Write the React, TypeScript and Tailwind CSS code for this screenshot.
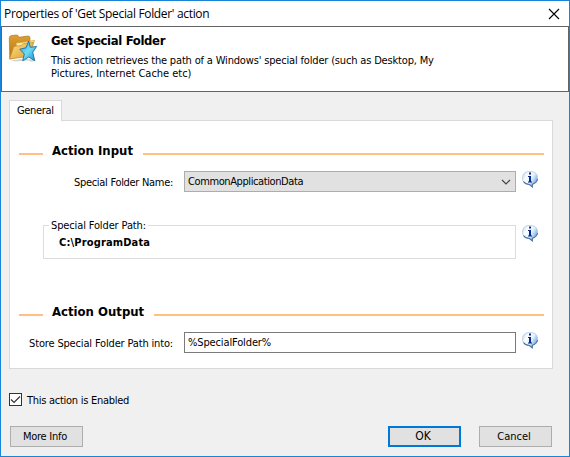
import { useId } from "react";
import type { ReactNode } from "react";

function FolderIcon() {
  return (
    <svg width="30" height="30" viewBox="0 0 30 30" className="mt-px">
      <defs>
        <linearGradient id="back" x1="0" y1="0" x2="0" y2="1">
          <stop offset="0" stopColor="#dfa036" />
          <stop offset="1" stopColor="#b4730f" />
        </linearGradient>
        <linearGradient id="front" x1="0" y1="0" x2="1" y2="1">
          <stop offset="0" stopColor="#ffe084" />
          <stop offset="1" stopColor="#d99a28" />
        </linearGradient>
        <linearGradient id="star" x1="0" y1="0" x2="1" y2="1">
          <stop offset="0" stopColor="#2f9fd6" />
          <stop offset="0.5" stopColor="#6fdcf6" />
          <stop offset="1" stopColor="#1687c0" />
        </linearGradient>
      </defs>
      <path d="M3 26.500 L16 24.500 L28 26 L24 28 L20 26.500 L7 27.500 Z" fill="#aaa" opacity="0.5" />
      <path d="M1.300 4 Q1.300 1.800 3.500 1.600 L8.500 1 Q10.300 1 11 3.300 L20 2 Q22 2 22 4 L21.500 20 L1.800 25 Z" fill="url(#back)" stroke="#b37819" strokeWidth="0.700" />
      <path d="M8 9 L26.500 6.500 L22.500 18 L9 19 Z" fill="#fbe9a8" stroke="#cf9930" strokeWidth="0.700" />
      <path d="M1.500 25 L5.500 13.500 Q6 12.300 7.300 12.200 L13 11.700 L15.500 9.500 L25.500 8.500 L20 22.500 Z" fill="url(#front)" stroke="#c38a25" strokeWidth="0.700" />
      <path d="M20.700 7 L22.300 13.300 L28.600 12.500 L24.800 18.200 L26.700 26.800 L20.800 23 L14.800 26.800 L16.300 20 L11.800 15.200 L18 13.800 Z" fill="url(#star)" stroke="#186fa3" strokeWidth="0.900" strokeLinejoin="round" />
    </svg>
  );
}

function InfoIcon() {
  const id = useId();
  return (
    <svg width="17" height="17" viewBox="0 0 17 17" className="shrink-0">
      <defs>
        <linearGradient id={id} x1="0" y1="0" x2="1" y2="0.600">
          <stop offset="0" stopColor="#b5d3f2" />
          <stop offset="0.350" stopColor="#ffffff" />
          <stop offset="0.650" stopColor="#e3f0fd" />
          <stop offset="1" stopColor="#6fa6e0" />
        </linearGradient>
      </defs>
      <path d="M5.500 0.600 H10.500 Q15.600 2 15.600 7 Q15.600 11.800 10.700 13.200 L10.500 16 L7.300 13.500 Q0.500 12.800 0.500 7 Q0.500 2 5.500 0.600 Z" fill={`url(#${id})`} stroke="#a9c3df" strokeWidth="0.700" />
      <path d="M1.500 10.500 Q3.500 13.500 7.500 13.500 L10.300 15.800 V13.200 Q14.800 12 15.500 8" fill="none" stroke="#4a719c" strokeWidth="1.100" />
      <path d="M7 1.500 H9 V3.500 H7 Z M6 5 H9 V10.500 H10 V11.500 H6 V10.500 H7 V6 H6 Z" fill="#062a8c" />
    </svg>
  );
}

function SectionTitle({ children }: { children: ReactNode }) {
  return (
    <div className="flex h-4 items-center pr-2 pl-[9px]">
      <span className="mt-[5px] h-0.5 w-6 bg-[#ffc080]" />
      <h2 className="ml-[9px] text-[13px] leading-4 font-bold whitespace-nowrap">{children}</h2>
      <span className="mt-[5px] ml-2.5 h-0.5 grow bg-[#ffc080]" />
    </div>
  );
}

export default function App() {
  return (
    <div className="flex h-[457px] w-[570px] flex-col border border-[#1883d7] bg-[#f0f0f0] font-['DejaVu_Sans_Condensed','DejaVu_Sans',sans-serif] text-[11px] leading-[13px] text-black">
      <header className="flex h-[25px] shrink-0 items-center justify-between bg-white pr-[9px] pl-[3px]">
        <span className="font-['Open_Sans',sans-serif] text-[12px] leading-4 tracking-[-0.33px] whitespace-nowrap">
          Properties of 'Get Special Folder' action
        </span>
        <svg width="12" height="12" viewBox="0 0 12 12">
          <path d="M1 1 L11 11 M11 1 L1 11" stroke="#000" strokeWidth="1.100" />
        </svg>
      </header>

      <section className="flex h-[66px] shrink-0 border border-[#646464] bg-white pt-[6px] pl-[6px]">
        <FolderIcon />
        <div className="ml-[13px]">
          <h1 className="text-[13px] leading-4 font-bold tracking-[-0.35px]">Get Special Folder</h1>
          <p className="mt-[5px] whitespace-nowrap">
            <span className="block tracking-[-0.17px]">This action retrieves the path of a Windows' special folder (such as Desktop, My</span>
            <span className="block tracking-[-0.02px]">Pictures, Internet Cache etc)</span>
          </p>
        </div>
      </section>

      <main className="flex flex-col px-2 pt-2">
        <div className="z-10 -mb-px h-[21px] w-[53px] border border-b-0 border-[#d9d9d9] bg-white pt-[3px] pl-[7px] tracking-[-0.35px]">
          General
        </div>
        <div className="flex h-[249px] w-[544px] flex-col border border-[#d9d9d9] bg-white pt-[22px]">
          <SectionTitle>Action Input</SectionTitle>
          <div className="mt-3 flex h-[21px]">
            <span className="w-[165px] pt-[5px] pr-0.5 text-right tracking-[-0.3px] whitespace-nowrap">Special Folder Name:</span>
            <div className="ml-[9px] flex w-[332px] items-center justify-between border border-[#adadad] bg-[#e1e1e1] pr-1 pl-[3px]">
              <span className="tracking-[-0.4px]">CommonApplicationData</span>
              <svg width="10" height="6" viewBox="0 0 10 6">
                <path d="M1 1 L5 5 L9 1" fill="none" stroke="#444" strokeWidth="1.200" />
              </svg>
            </div>
            <div className="ml-[6px]"><InfoIcon /></div>
          </div>
          <div className="mt-[33px] ml-[33px] flex items-start">
            <div className="flex h-[34px] w-[473px] flex-col items-start border border-[#dcdcdc]">
              <span className="-mt-[7px] ml-[5px] bg-white px-0.5 tracking-[-0.13px] whitespace-nowrap">Special Folder Path:</span>
              <b className="mt-1 ml-[15px] tracking-[0.15px]">C:\ProgramData</b>
            </div>
            <div className="ml-[6px]"><InfoIcon /></div>
          </div>
          <div className="mt-auto mb-3">
            <SectionTitle>Action Output</SectionTitle>
          </div>
          <div className="mb-[15px] flex h-[21px]">
            <span className="w-[165px] pt-[5px] pr-0.5 text-right tracking-[-0.16px] whitespace-nowrap">Store Special Folder Path into:</span>
            <input
              defaultValue="%SpecialFolder%"
              className="ml-[9px] w-[332px] border border-[#7a7a7a] bg-white pb-px pl-[3px] tracking-[-0.13px] outline-none"
            />
            <div className="ml-[6px]"><InfoIcon /></div>
          </div>
        </div>

        <div className="mt-6 flex h-[13px] items-center">
          <span className="flex size-[13px] items-center justify-center border border-[#333] bg-white">
            <svg width="11" height="11" viewBox="0 0 11 11">
              <path d="M1 5.500 L4 8.500 L10 2.500" fill="none" stroke="#333" strokeWidth="1.200" />
            </svg>
          </span>
          <span className="ml-[5px] pt-px tracking-[-0.27px]">This action is Enabled</span>
        </div>

        <div className="mt-5 ml-px flex h-[21px]">
          <button className="w-[73px] border border-[#adadad] bg-[#e1e1e1] pr-[3px] tracking-[-0.27px]">More Info</button>
          <button className="ml-[305px] w-[73px] border-2 border-[#0078d7] bg-[#e1e1e1] pr-[3px] text-[12px]">OK</button>
          <button className="ml-[18px] w-[73px] border border-[#adadad] bg-[#e1e1e1] pr-[3px]">Cancel</button>
        </div>
      </main>
    </div>
  );
}
